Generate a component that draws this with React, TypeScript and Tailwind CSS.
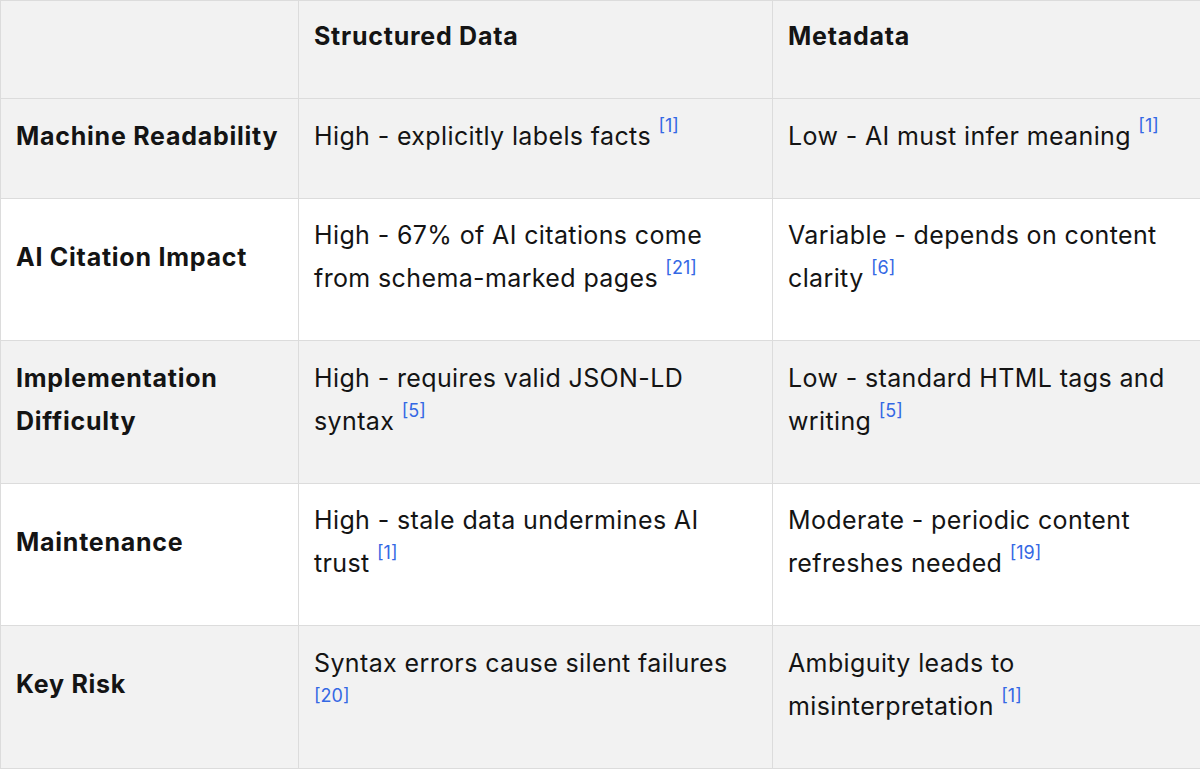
import React from "react";

type Cell = { text: string; refs?: string };
type Row = { label: string; a: Cell; b: Cell; gray: boolean };

const rows: Row[] = [
  {
    label: "Machine Readability",
    a: { text: "High - explicitly labels facts", refs: "[1]" },
    b: { text: "Low - AI must infer meaning", refs: "[1]" },
    gray: true,
  },
  {
    label: "AI Citation Impact",
    a: { text: "High - 67% of AI citations come from schema-marked pages", refs: "[21]" },
    b: { text: "Variable - depends on content clarity", refs: "[6]" },
    gray: false,
  },
  {
    label: "Implementation Difficulty",
    a: { text: "High - requires valid JSON-LD syntax", refs: "[5]" },
    b: { text: "Low - standard HTML tags and writing", refs: "[5]" },
    gray: true,
  },
  {
    label: "Maintenance",
    a: { text: "High - stale data undermines AI trust", refs: "[1]" },
    b: { text: "Moderate - periodic content refreshes needed", refs: "[19]" },
    gray: false,
  },
  {
    label: "Key Risk",
    a: { text: "Syntax errors cause silent failures", refs: "[20]" },
    b: { text: "Ambiguity leads to misinterpretation", refs: "[1]" },
    gray: true,
  },
];

function Content({ c }: { c: Cell }) {
  return (
    <>
      {c.text}{" "}
      {c.refs && (
        <sup className="text-[18px] tracking-normal text-[#3468e4] top-[-0.7em]">{c.refs}</sup>
      )}
    </>
  );
}

export default function App() {
  const cell =
    "border border-[#dcdcdc] pl-[15px] pr-4 pt-[15.5px] pb-[40px] align-middle text-left";
  const head =
    "border border-[#dcdcdc] pl-[15px] pr-4 pt-[14px] pb-[40px] align-middle text-left font-bold tracking-[0.03em]";
  return (
    <div
      className="w-[1200px] h-[769px] bg-white text-[#141414] overflow-hidden"
      style={{ fontFamily: "Inter, 'Noto Sans', sans-serif" }}
    >
      <table className="w-[1200px] table-fixed border-collapse text-[25px] leading-[43px] tracking-[0.015em]">
        <colgroup>
          <col className="w-[298px]" />
          <col className="w-[474px]" />
          <col className="w-[428px]" />
        </colgroup>
        <thead>
          <tr className="bg-[#f2f2f2]">
            <th className={head}></th>
            <th className={head}>Structured Data</th>
            <th className={head}>Metadata</th>
          </tr>
        </thead>
        <tbody>
          {rows.map((r) => (
            <tr key={r.label} className={r.gray ? "bg-[#f2f2f2]" : "bg-white"}>
              <td className={cell + " font-bold tracking-[0.03em]"}>{r.label}</td>
              <td className={cell}>
                <Content c={r.a} />
              </td>
              <td className={cell}>
                <Content c={r.b} />
              </td>
            </tr>
          ))}
        </tbody>
      </table>
    </div>
  );
}
